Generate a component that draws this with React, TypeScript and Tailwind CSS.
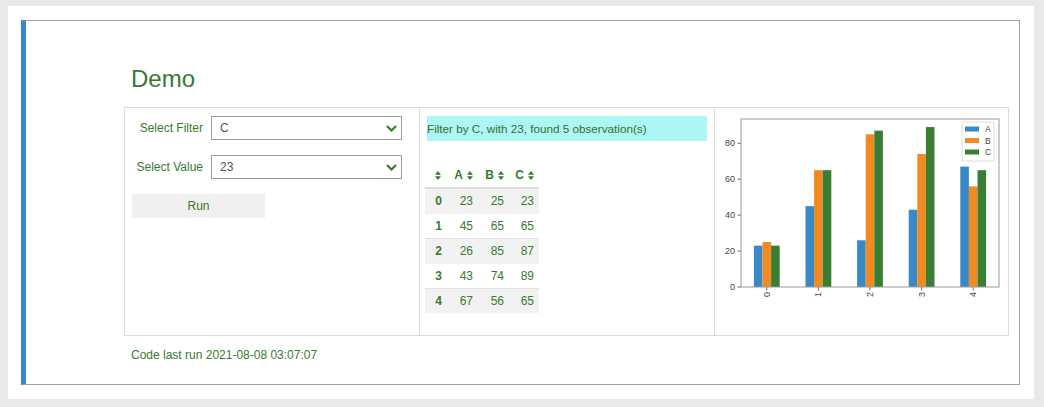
import React from "react";

const GREEN = "#377a31";

const rows = [
  { i: 0, a: 23, b: 25, c: 23 },
  { i: 1, a: 45, b: 65, c: 65 },
  { i: 2, a: 26, b: 85, c: 87 },
  { i: 3, a: 43, b: 74, c: 89 },
  { i: 4, a: 67, b: 56, c: 65 },
];

// small up/down triangle sort glyph
const SortIcon = () => (
  <svg width="6" height="9" viewBox="0 0 6 9" className="shrink-0">
    <path d="M3 0 L6 3.8 L0 3.8 Z M3 9 L6 5.2 L0 5.2 Z" fill={GREEN} />
  </svg>
);

const Chevron = () => (
  <svg width="11" height="7" viewBox="0 0 11 7">
    <polyline points="1,1 5.5,5.5 10,1" fill="none" stroke={GREEN} strokeWidth="2.2" />
  </svg>
);

const SelectBox = ({ value }: { value: string }) => (
  <div className="flex h-[24px] w-[191px] items-center justify-between border border-[#9c9c9c] bg-white pl-[8px] pr-[4px] text-[#555]">
    <span>{value}</span>
    <Chevron />
  </div>
);

// ── Chart (coordinates in page pixels via viewBox) ──────────────────────────
const BLUE = "#3a88c5";
const ORANGE = "#f28a22";
const DGREEN = "#3a7d34";

const Chart = () => {
  const x0 = 766.8;
  const step = 51.6;
  const bw = 8.6;
  const base = 287;
  const k = 1.797;
  const yTicks = [0, 20, 40, 60, 80];
  return (
    <svg width="293" height="227" viewBox="715 108 293 227" className="block">
      {rows.map((r, i) => {
        const cx = x0 + step * i;
        return (
          <g key={i}>
            <rect x={cx - 1.5 * bw} y={base - r.a * k} width={bw} height={r.a * k} fill={BLUE} />
            <rect x={cx - 0.5 * bw} y={base - r.b * k} width={bw} height={r.b * k} fill={ORANGE} />
            <rect x={cx + 0.5 * bw} y={base - r.c * k} width={bw} height={r.c * k} fill={DGREEN} />
            <line x1={cx} y1={base} x2={cx} y2={base + 3.5} stroke="#444" strokeWidth="0.8" />
            <text
              x={cx}
              y={base + 5}
              transform={`rotate(-90 ${cx} ${base + 5})`}
              textAnchor="end"
              dominantBaseline="central"
              fontSize="9"
              fill="#444"
            >
              {r.i}
            </text>
          </g>
        );
      })}
      {yTicks.map((t) => {
        const y = base - t * k;
        return (
          <g key={t}>
            <line x1={737.5} y1={y} x2={741} y2={y} stroke="#444" strokeWidth="0.8" />
            <text x={735} y={y} textAnchor="end" dominantBaseline="central" fontSize="9" fill="#444">
              {t}
            </text>
          </g>
        );
      })}
      <rect x={741} y={119} width={258} height={168} fill="none" stroke="#9a9a9a" strokeWidth="1" />
      {/* legend */}
      <rect x={962} y={122} width={32} height={39} rx={2} fill="white" stroke="#d6d6d6" strokeWidth="0.8" />
      {[
        { c: BLUE, l: "A", y: 129 },
        { c: ORANGE, l: "B", y: 140.5 },
        { c: DGREEN, l: "C", y: 152 },
      ].map((e) => (
        <g key={e.l}>
          <rect x={965} y={e.y - 2.5} width={14} height={5} fill={e.c} />
          <text x={985} y={e.y} dominantBaseline="central" fontSize="8.5" fill="#444">
            {e.l}
          </text>
        </g>
      ))}
    </svg>
  );
};

export default function App() {
  return (
    <div
      className="h-[407px] w-[1044px] bg-[#e9e9e9] pl-[8px] pt-[6px] font-['Liberation_Sans',Arial,sans-serif] text-[12px]"
      style={{ color: GREEN }}
    >
      <div className="h-[393px] w-[1026px] bg-white pl-[13px] pt-[14px]">
        <div className="h-[365px] w-[999px] border border-l-[5px] border-[#a3a3a3] border-l-[#3a8ac9] pl-[98px] pt-[44px]">
          {/* ── Title ─────────────────────────────────────── */}
          <h1 className="pl-[7px] text-[24px] leading-[28px]">Demo</h1>

          {/* ── Three panels ─────────────────────────────── */}
          <div className="mt-[14px] flex h-[229px] w-[885px] border border-[#dcdcdc]">
            {/* inputs */}
            <div className="w-[295px] shrink-0 border-r border-[#dcdcdc] pt-[8px]">
              <div className="flex items-center">
                <div className="w-[78px] text-right">Select Filter</div>
                <div className="ml-[8px]">
                  <SelectBox value="C" />
                </div>
              </div>
              <div className="mt-[15px] flex items-center">
                <div className="w-[78px] text-right">Select Value</div>
                <div className="ml-[8px]">
                  <SelectBox value="23" />
                </div>
              </div>
              <div className="ml-[7px] mt-[15px] flex h-[24px] w-[133px] items-center justify-center bg-[#efefef]">
                Run
              </div>
            </div>

            {/* filtered table */}
            <div className="w-[295px] shrink-0 border-r border-[#dcdcdc] px-[7px] pt-[8px]">
              <div className="flex h-[25px] w-[280px] items-center bg-[#acf6f4] text-[11.7px] text-[#3b6e2c]">
                Filter by C, with 23, found 5 observation(s)
              </div>
              <table className="-ml-[2px] mt-[22px] table-fixed border-collapse">
                <colgroup>
                  <col className="w-[22px]" />
                  <col className="w-[31px]" />
                  <col className="w-[31px]" />
                  <col className="w-[30px]" />
                </colgroup>
                <thead>
                  <tr className="h-[25px] border-b-2 border-[#dcdcdc]">
                    <th className="p-0 pr-[6px]">
                      <div className="flex justify-end">
                        <SortIcon />
                      </div>
                    </th>
                    {["A", "B", "C"].map((h) => (
                      <th key={h} className="p-0 pr-[5px] font-bold">
                        <div className="flex items-center justify-end gap-[4px]">
                          <span>{h}</span>
                          <SortIcon />
                        </div>
                      </th>
                    ))}
                  </tr>
                </thead>
                <tbody>
                  {rows.map((r) => (
                    <tr
                      key={r.i}
                      className={
                        r.i % 2 === 0
                          ? "h-[25px] border-t border-[#e2e2e2] bg-[#f2f2f2]"
                          : "h-[25px] border-t border-[#f2f2f2]"
                      }
                    >
                      <td className="p-0 pr-[5px] text-right font-bold">{r.i}</td>
                      <td className="p-0 pr-[5px] text-right">{r.a}</td>
                      <td className="p-0 pr-[5px] text-right">{r.b}</td>
                      <td className="p-0 pr-[5px] text-right">{r.c}</td>
                    </tr>
                  ))}
                </tbody>
              </table>
            </div>

            {/* chart */}
            <div className="w-[293px] shrink-0">
              <Chart />
            </div>
          </div>

          {/* ── Footer ───────────────────────────────────── */}
          <div className="mt-[11px] pl-[7px] leading-[16px]">Code last run 2021-08-08 03:07:07</div>
        </div>
      </div>
    </div>
  );
}
